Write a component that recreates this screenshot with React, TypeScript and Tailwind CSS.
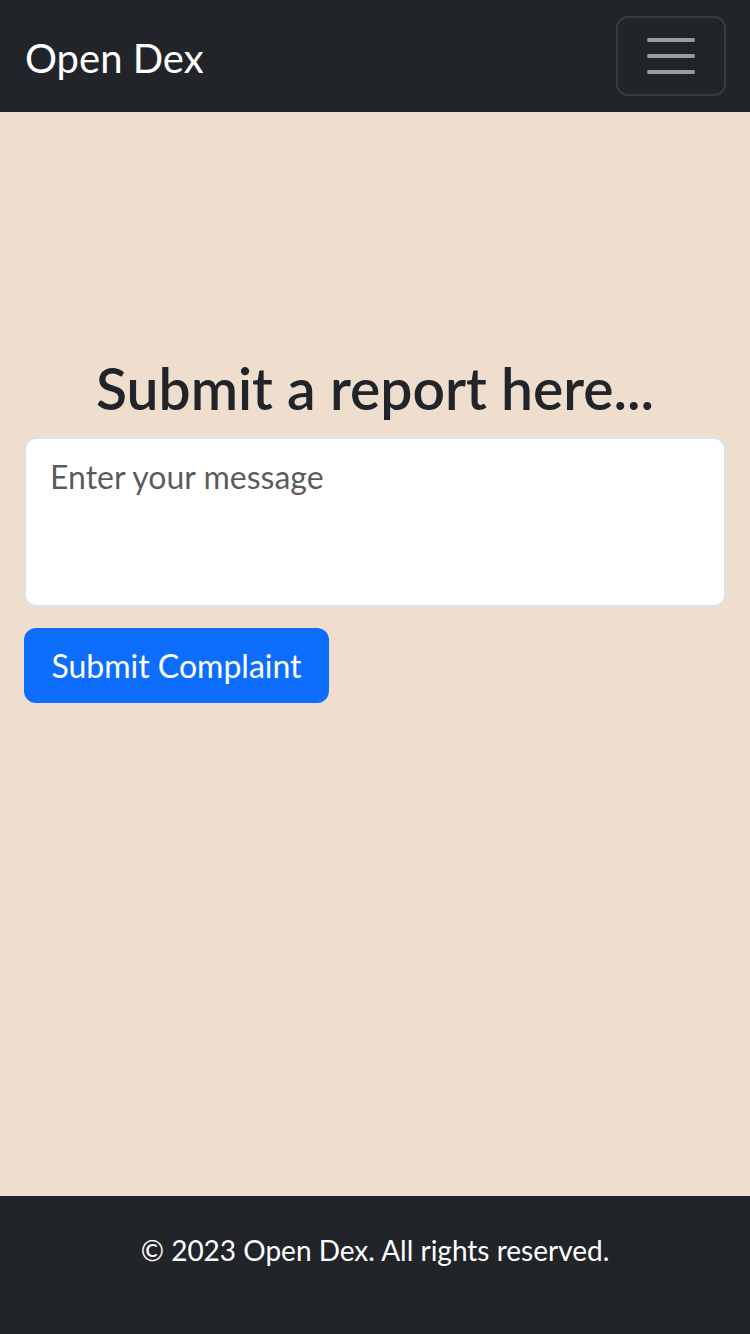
export default function App() {
  const font = { fontFamily: 'Lato, "Noto Sans", sans-serif' };
  return (
    <div className="flex min-h-[1334px] flex-col bg-[#efddce]" style={font}>
      <nav className="flex h-[112px] items-center justify-between bg-[#212529] pl-[25px] pr-[24px]">
        <span className="pt-[4px] text-[40px] leading-[60px] text-white">Open Dex</span>
        <button className="flex h-[80px] w-[110px] items-center justify-center rounded-[12px] border-2 border-white/10">
          <svg width="60" height="60" viewBox="0 0 30 30">
            <path d="M4 7h22M4 15h22M4 23h22" stroke="rgba(255,255,255,0.55)" strokeWidth="2" strokeLinecap="round" />
          </svg>
        </button>
      </nav>
      <main className="flex flex-1 flex-col px-[24px] pt-[243px]">
        <h1 className="mb-[16px] text-center text-[57px] font-semibold leading-[66px] text-[#212529]">Submit a report here...</h1>
        <textarea
          placeholder="Enter your message"
          className="h-[170px] w-full resize-none rounded-[12px] border-2 border-[#dee2e6] bg-white px-[24px] pt-[14px] pb-[12px] text-[32px] leading-[48px] text-[#212529] outline-none placeholder:text-[#212529]/75"
        />
        <div className="mt-[21px]">
          <button className="h-[75px] w-[305px] rounded-[12px] bg-[#0d6efd] text-center text-[32px] leading-[48px] text-white">Submit Complaint</button>
        </div>
      </main>
      <footer className="h-[138px] bg-[#212529] pt-[33px] text-center text-[28px] leading-[42px] text-white">
        © 2023 Open Dex. All rights reserved.
      </footer>
    </div>
  );
}
